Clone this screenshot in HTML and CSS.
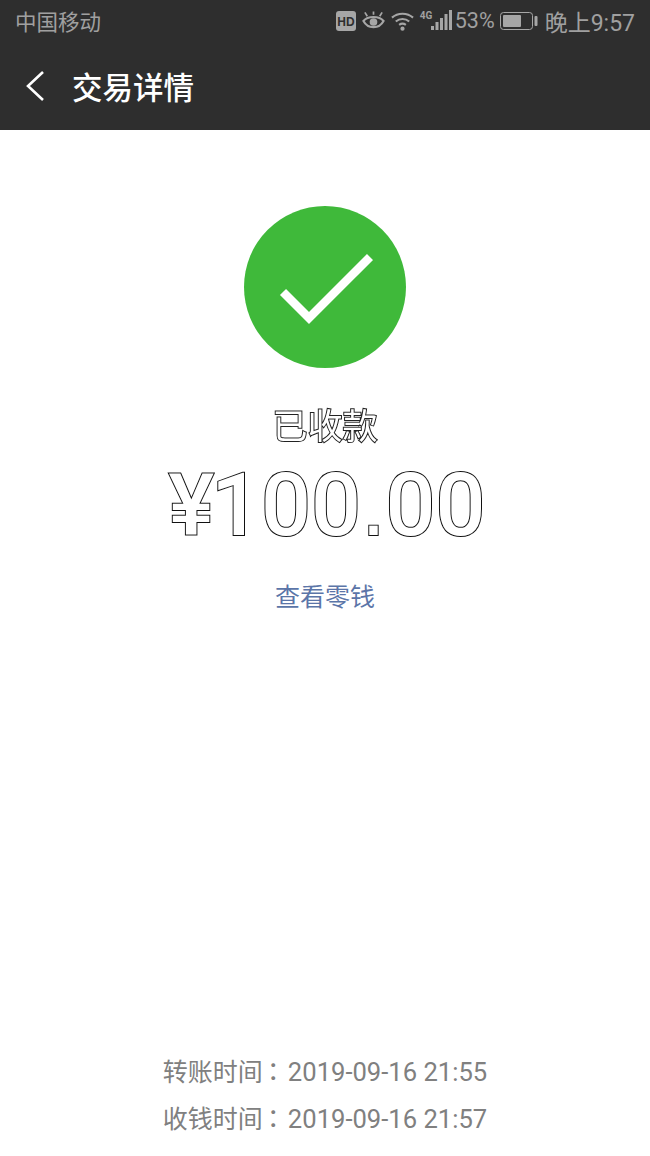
FILE: index.html
```html
<!DOCTYPE html>
<html lang="zh-CN">
<head>
  <meta charset="UTF-8" />
  <title>交易详情</title>
  <link rel="stylesheet" href="styles.css">
</head>
<body>
  <div class="top">
    <div class="status">
      <span class="carrier">中国移动</span>
      <div class="status-right">
        <svg class="ic-hd" width="20" height="20" viewBox="0 0 20 20">
          <rect width="20" height="20" rx="3" fill="#a6a6a6"/>
          <text x="10" y="14.5" text-anchor="middle" class="hd-text">HD</text>
        </svg>
        <svg class="ic-eye" width="23" height="20" viewBox="0 0 24 20" fill="none" stroke="#a6a6a6">
          <path d="M1.500 10 C6 4.500 18 4.500 22.500 10 C18 18.500 6 18.500 1.500 10Z" stroke-width="2.200"/>
          <circle cx="12" cy="11" r="4" fill="#a6a6a6" stroke="none"/>
          <path d="M3 1 L5.500 5 M12 0 V3.500 M21 1 L18.500 5" stroke-width="1.800"/>
        </svg>
        <svg class="ic-wifi" width="23" height="20" viewBox="0 0 24 20" fill="none" stroke="#a6a6a6" stroke-width="2.200">
          <path d="M1 6.500 C7 1 17 1 23 6.500"/>
          <path d="M5 10.500 C9 7 15 7 19 10.500"/>
          <path d="M8.500 14 C10.500 12.500 13.500 12.500 15.500 14"/>
          <circle cx="12" cy="18" r="2.200" fill="#a6a6a6" stroke="none"/>
        </svg>
        <div class="signal">
          <span class="net">4G</span>
          <svg width="21" height="21" viewBox="0 0 21 21" fill="#a6a6a6">
            <rect x="0" y="16" width="3" height="4"/>
            <rect x="4.500" y="12" width="3" height="8"/>
            <rect x="9" y="8" width="3" height="12"/>
            <rect x="13.500" y="4" width="3" height="16"/>
            <rect x="18" y="0" width="3" height="20"/>
          </svg>
        </div>
        <span class="pct">53%</span>
        <svg class="ic-batt" width="38" height="18" viewBox="0 0 38 18">
          <rect x="0.500" y="0.500" width="32" height="17" rx="3" fill="none" stroke="#a6a6a6"/>
          <rect x="3" y="3" width="18" height="12" rx="1" fill="#a6a6a6"/>
          <rect x="34.500" y="4" width="3" height="10" rx="1" fill="#a6a6a6"/>
        </svg>
        <span class="clock">晚上9:57</span>
      </div>
    </div>
    <div class="titlebar">
      <svg class="back" width="20" height="32" viewBox="0 0 20 32" fill="none" stroke="#fff" stroke-width="2.600">
        <path d="M18 2 L3 16 L18 30"/>
      </svg>
      <span class="title">交易详情</span>
    </div>
  </div>

  <main class="content">
    <svg class="ok" width="162" height="162" viewBox="0 0 162 162">
      <circle cx="81" cy="81" r="81" fill="#3fb93a"/>
      <path d="M39 86 L65 112 L126 51" fill="none" stroke="#fff" stroke-width="8.500"/>
    </svg>
    <div class="state">已收款</div>
    <div class="amount"><span class="yen">¥</span>100<span class="dot">.</span>00</div>
    <a class="link">查看零钱</a>
  </main>

  <div class="times">
    <div class="time-row"><span>转账时间</span><span class="colon" lang="zh-TW">：</span><span class="stamp">2019-09-16 21:55</span></div>
    <div class="time-row"><span>收钱时间</span><span class="colon" lang="zh-TW">：</span><span class="stamp">2019-09-16 21:57</span></div>
  </div>
</body>
</html>
```

FILE: styles.css
```css
html, body {
  margin: 0;
  height: 1156px;
  overflow: hidden;
}
body {
  font-family: Roboto, "Noto Sans CJK SC", sans-serif;
  background: #fff;
  display: flex;
  flex-direction: column;
}
.top {
  background: #2e2e2e;
  height: 130px;
}
.status {
  box-sizing: border-box;
  height: 45px;
  padding: 0 15px 4px;
  display: flex;
  align-items: center;
  justify-content: space-between;
  color: #a0a0a0;
  font-size: 21.5px;
}
.status-right {
  display: flex;
  align-items: center;
}
.hd-text {
  font: bold 12px "Liberation Sans", sans-serif;
  fill: #2e2e2e;
}
.ic-eye {
  margin-left: 6px;
}
.ic-wifi {
  margin-left: 6px;
}
.signal {
  display: flex;
  align-items: flex-end;
  margin-left: 6px;
}
.net {
  width: 11px;
  font-size: 10px;
  font-weight: 700;
  align-self: flex-start;
  line-height: 11px;
  white-space: nowrap;
}
.pct {
  margin-left: 3px;
  font-size: 21.5px;
}
.ic-batt {
  margin-left: 5px;
}
.clock {
  margin-left: 7px;
  font-size: 23px;
}
.titlebar {
  box-sizing: border-box;
  height: 85px;
  padding: 0 0 4px 25px;
  display: flex;
  align-items: center;
}
.title {
  margin-left: 27px;
  color: #fff;
  font-size: 30.5px;
  font-weight: 500;
}
.content {
  flex: 1;
  display: flex;
  flex-direction: column;
  align-items: center;
  padding-top: 76px;
}
.state {
  margin-top: 38px;
  font-size: 35px;
  line-height: 44px;
  color: #fff;
  -webkit-text-stroke: 2px #222;
  paint-order: stroke fill;
  filter: grayscale(1);
}
.amount {
  margin-top: 9px;
  font-size: 88px;
  font-weight: 500;
  line-height: 92px;
  color: #fff;
  -webkit-text-stroke: 2px #111;
  paint-order: stroke fill;
}
.yen {
  font-size: 86px;
  margin: 0 -3px 0 4px;
}
.dot {
  font-family: "Liberation Sans", sans-serif;
}
.link {
  margin-top: 29px;
  color: #5b75a8;
  font-size: 25px;
  line-height: 34px;
}
.times {
  padding-bottom: 15px;
  color: #808080;
  font-size: 25px;
  line-height: 47px;
  text-align: center;
}
.time-row {
  height: 47px;
}
.colon {
  font-family: "Noto Sans CJK TC", sans-serif;
  margin: 0 2px 0 -2px;
}
.stamp {
  font-size: 25.6px;
}
```
